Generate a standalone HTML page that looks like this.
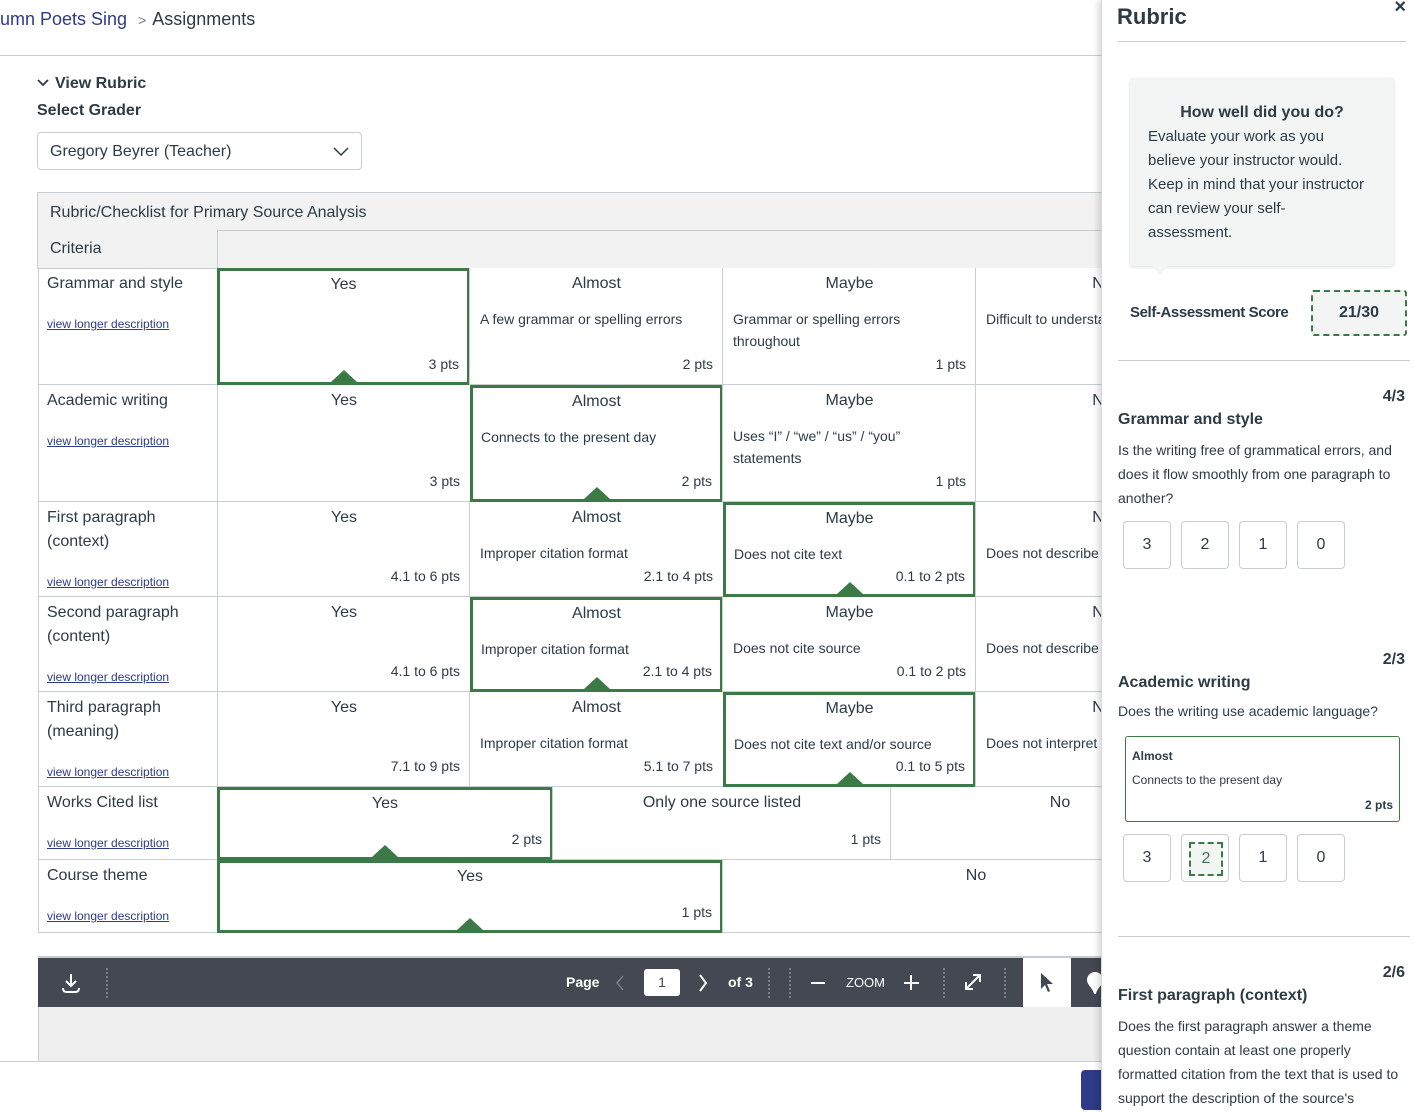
<!DOCTYPE html>
<html><head><meta charset="utf-8">
<style>
*{box-sizing:border-box;margin:0;padding:0}
body{width:1414px;height:1112px;overflow:hidden;position:relative;background:#fff;font-family:"Liberation Sans",sans-serif;color:#2d3b45}
.a{position:absolute}
.c{position:absolute;border:1px solid #c7cdd1;border-top:none;background:#fff}
.t{position:absolute;left:0;right:0;top:7px;text-align:center;font-size:16px}
.d{position:absolute;left:10px;right:8px;top:40px;font-size:14px;line-height:22px}
.p{position:absolute;right:10px;bottom:12px;font-size:14px}
.s{border:3px solid #3b7a46}
.s .t{top:5px}.s .d{left:8px;top:38px}.s .p{right:8px;bottom:10px}
.tri{position:absolute;bottom:0;left:50%;margin-left:-13px;width:0;height:0;border-left:13px solid transparent;border-right:13px solid transparent;border-bottom:12px solid #3b7a46}
.cr{position:absolute;left:38px;width:180px;border-left:1px solid #c7cdd1;border-right:1px solid #c7cdd1;border-bottom:1px solid #c7cdd1;padding:4px 8px;font-size:16px;line-height:24px}
.cr a{position:absolute;left:8px;top:44px;font-size:12px;color:#2d3b89;text-decoration:underline}
.cr.two a{top:68px}
.sb{position:absolute;width:48px;height:48px;border:1px solid #c7cdd1;border-radius:4px;text-align:center;line-height:46px;font-size:16px;color:#2d3b45}
.sep{position:absolute;top:10px;width:0;height:30px;border-left:2px dotted #7a808a}
</style></head><body>
<div class="a" style="left:0;top:9px;font-size:18px;color:#2d3b89;white-space:nowrap">umn Poets Sing <span style="color:#6b7780;font-size:14px;margin:0 6px">&gt;</span><span style="color:#2d3b45">Assignments</span></div>
<div class="a" style="left:0;top:55px;width:1110px;height:1px;background:#c7cdd1"></div>
<div class="a" style="left:37px;top:75px;font-size:16px;font-weight:bold"><svg width="12" height="10" style="margin-right:6px"><path d="M1 2l5 5 5-5" stroke="#2d3b45" stroke-width="1.8" fill="none"/></svg>View Rubric</div>
<div class="a" style="left:37px;top:102px;font-size:16px;font-weight:bold">Select Grader</div>
<div class="a" style="left:37px;top:132px;width:325px;height:38px;border:1px solid #c7cdd1;border-radius:4px;padding:0 12px;line-height:38px;font-size:16px">Gregory Beyrer (Teacher)
<svg width="16" height="10" class="a" style="right:12px;top:14px"><path d="M1 1l7 7 7-7" stroke="#2d3b45" stroke-width="1.5" fill="none"/></svg></div>
<div class="a" style="left:37px;top:192px;width:1080px;height:39px;background:#f2f2f2;border:1px solid #c7cdd1;padding:0 12px;line-height:39px;font-size:16px">Rubric/Checklist for Primary Source Analysis</div>
<div class="a" style="left:217px;top:231px;width:900px;height:38px;background:#f2f2f2;border-bottom:1px solid #c7cdd1"></div>
<div class="a" style="left:37px;top:230px;width:181px;height:39px;background:#f2f2f2;border:1px solid #c7cdd1;border-top:none;padding:0 12px;line-height:38px;font-size:16px">Criteria</div>

<div class="cr" style="top:268px;height:117px">Grammar and style<a>view longer description</a></div>
<div class="c s" style="left:217px;top:268px;width:253px;height:117px"><div class="t">Yes</div><div class="p">3 pts</div><div class="tri"></div></div>
<div class="c" style="left:469px;top:268px;width:255px;height:117px"><div class="t">Almost</div><div class="d">A few grammar or spelling errors</div><div class="p">2 pts</div></div>
<div class="c" style="left:722px;top:268px;width:255px;height:117px"><div class="t">Maybe</div><div class="d" style="right:30px">Grammar or spelling errors throughout</div><div class="p">1 pts</div></div>
<div class="c" style="left:975px;top:268px;width:255px;height:117px"><div class="t">No</div><div class="d">Difficult to understand</div></div>

<div class="cr" style="top:385px;height:117px">Academic writing<a>view longer description</a></div>
<div class="c" style="left:217px;top:385px;width:254px;height:117px"><div class="t">Yes</div><div class="p">3 pts</div></div>
<div class="c s" style="left:470px;top:385px;width:253px;height:117px"><div class="t">Almost</div><div class="d">Connects to the present day</div><div class="p">2 pts</div><div class="tri"></div></div>
<div class="c" style="left:722px;top:385px;width:255px;height:117px"><div class="t">Maybe</div><div class="d" style="right:50px">Uses “I” / “we” / “us” / “you” statements</div><div class="p">1 pts</div></div>
<div class="c" style="left:975px;top:385px;width:255px;height:117px"><div class="t">No</div></div>

<div class="cr two" style="top:502px;height:95px">First paragraph<br>(context)<a>view longer description</a></div>
<div class="c" style="left:217px;top:502px;width:254px;height:95px"><div class="t">Yes</div><div class="p">4.1 to 6 pts</div></div>
<div class="c" style="left:469px;top:502px;width:255px;height:95px"><div class="t">Almost</div><div class="d">Improper citation format</div><div class="p">2.1 to 4 pts</div></div>
<div class="c s" style="left:723px;top:502px;width:253px;height:95px"><div class="t">Maybe</div><div class="d">Does not cite text</div><div class="p">0.1 to 2 pts</div><div class="tri"></div></div>
<div class="c" style="left:975px;top:502px;width:255px;height:95px"><div class="t">No</div><div class="d">Does not describe</div></div>

<div class="cr two" style="top:597px;height:95px">Second paragraph<br>(content)<a>view longer description</a></div>
<div class="c" style="left:217px;top:597px;width:254px;height:95px"><div class="t">Yes</div><div class="p">4.1 to 6 pts</div></div>
<div class="c s" style="left:470px;top:597px;width:253px;height:95px"><div class="t">Almost</div><div class="d">Improper citation format</div><div class="p">2.1 to 4 pts</div><div class="tri"></div></div>
<div class="c" style="left:722px;top:597px;width:255px;height:95px"><div class="t">Maybe</div><div class="d">Does not cite source</div><div class="p">0.1 to 2 pts</div></div>
<div class="c" style="left:975px;top:597px;width:255px;height:95px"><div class="t">No</div><div class="d">Does not describe</div></div>

<div class="cr two" style="top:692px;height:95px">Third paragraph<br>(meaning)<a>view longer description</a></div>
<div class="c" style="left:217px;top:692px;width:254px;height:95px"><div class="t">Yes</div><div class="p">7.1 to 9 pts</div></div>
<div class="c" style="left:469px;top:692px;width:255px;height:95px"><div class="t">Almost</div><div class="d">Improper citation format</div><div class="p">5.1 to 7 pts</div></div>
<div class="c s" style="left:723px;top:692px;width:253px;height:95px"><div class="t">Maybe</div><div class="d">Does not cite text and/or source</div><div class="p">0.1 to 5 pts</div><div class="tri"></div></div>
<div class="c" style="left:975px;top:692px;width:255px;height:95px"><div class="t">No</div><div class="d">Does not interpret</div></div>

<div class="cr" style="top:787px;height:73px">Works Cited list<a>view longer description</a></div>
<div class="c s" style="left:217px;top:787px;width:336px;height:73px"><div class="t">Yes</div><div class="p">2 pts</div><div class="tri"></div></div>
<div class="c" style="left:552px;top:787px;width:340px;height:73px"><div class="t">Only one source listed</div><div class="p">1 pts</div></div>
<div class="c" style="left:890px;top:787px;width:340px;height:73px"><div class="t">No</div></div>

<div class="cr" style="top:860px;height:73px">Course theme<a>view longer description</a></div>
<div class="c s" style="left:217px;top:860px;width:506px;height:73px"><div class="t">Yes</div><div class="p">1 pts</div><div class="tri"></div></div>
<div class="c" style="left:722px;top:860px;width:508px;height:73px"><div class="t">No</div></div>

<div class="a" style="left:38px;top:956px;width:1070px;height:2px;background:#c7cdd1"></div>
<div class="a" style="left:38px;top:958px;width:1070px;height:49px;background:#434853;color:#fff">
  <svg class="a" style="left:24px;top:15px" width="18" height="20"><path d="M9 1v12M4 8l5 5 5-5M1 15q0 4 4 4h8q4 0 4-4" stroke="#fff" stroke-width="2" fill="none"/></svg>
  <div class="sep" style="left:68px"></div>
  <div class="a" style="left:528px;top:16px;font-size:14px;font-weight:bold">Page</div>
  <svg class="a" style="left:577px;top:17px" width="10" height="16"><path d="M8 1L2 8l6 7" stroke="#7a808a" stroke-width="1.5" fill="none"/></svg>
  <div class="a" style="left:606px;top:11px;width:36px;height:27px;background:#fff;border-radius:3px;color:#434853;text-align:center;line-height:27px;font-size:14px">1</div>
  <svg class="a" style="left:660px;top:16px" width="10" height="18"><path d="M2 1l6 8-6 8" stroke="#fff" stroke-width="2" fill="none"/></svg>
  <div class="a" style="left:690px;top:16px;font-size:14px;font-weight:bold">of 3</div>
  <div class="sep" style="left:730px"></div><div class="sep" style="left:751px"></div>
  <div class="a" style="left:773px;top:24px;width:14px;height:2px;background:#fff"></div>
  <div class="a" style="left:808px;top:17px;font-size:13px">ZOOM</div>
  <div class="a" style="left:866px;top:24px;width:15px;height:2px;background:#fff"></div>
  <div class="a" style="left:872px;top:17px;width:2px;height:15px;background:#fff"></div>
  <div class="sep" style="left:905px"></div>
  <svg class="a" style="left:925px;top:14px" width="20" height="20"><path d="M3 17L17 3M10 3h7v7M3 10v7h7" stroke="#fff" stroke-width="2" fill="none"/></svg>
  <div class="sep" style="left:966px"></div>
  <div class="a" style="left:985px;top:0;width:48px;height:49px;background:#fff"></div>
  <svg class="a" style="left:1001px;top:14px" width="16" height="22"><path d="M2 1v16l4-4 3 7 2-1-3-7h6z" fill="#434853"/></svg>
  <svg class="a" style="left:1047px;top:13px" width="20" height="24"><path d="M10 1a8 8 0 0 1 8 8c0 5-6 8-7 14h-2c-1-6-7-9-7-14a8 8 0 0 1 8-8z" fill="#fff"/></svg>
</div>
<div class="a" style="left:38px;top:1007px;width:1070px;height:54px;background:#efefef;border-left:1px solid #c7cdd1"></div>
<div class="a" style="left:0;top:1061px;width:1110px;height:1px;background:#c7cdd1"></div>
<div class="a" style="left:1081px;top:1070px;width:30px;height:40px;background:#2d3b89;border-radius:4px"></div>

<div class="a" style="left:1101px;top:0;width:313px;height:1112px;background:#fff;box-shadow:-3px 0 6px rgba(0,0,0,.15);border-left:1px solid #d5d9dc">
  <div class="a" style="left:15px;top:4px;font-size:22px;font-weight:bold">Rubric</div>
  <div class="a" style="right:8px;top:-4px;font-size:20px;font-weight:bold">×</div>
  <div class="a" style="left:16px;top:41px;width:288px;height:1px;background:#c7cdd1"></div>
  <div class="a" style="left:28px;top:78px;width:264px;height:188px;background:#f2f5f4;border-radius:3px;box-shadow:0 1px 3px rgba(0,0,0,.15);padding:23px 30px 0 18px;font-size:15px;line-height:24px">
    <div style="text-align:center;font-weight:bold;font-size:16px;margin-right:-12px">How well did you do?</div>
    Evaluate your work as you believe your instructor would. Keep in mind that your instructor can review your self-assessment.
  </div>
  <div class="a" style="left:50px;top:266px;width:0;height:0;border-left:8px solid transparent;border-right:8px solid transparent;border-top:8px solid #f2f5f4"></div>
  <div class="a" style="left:28px;top:304px;font-size:15px;font-weight:bold;letter-spacing:-0.4px">Self-Assessment Score</div>
  <div class="a" style="left:209px;top:290px;width:96px;height:46px;border:2px dashed #3b7a46;border-radius:3px;background:#f2f5f4;text-align:center;line-height:42px;font-size:16px;font-weight:bold">21/30</div>
  <div class="a" style="left:16px;top:360px;width:292px;height:1px;background:#c7cdd1"></div>
  <div class="a" style="right:9px;top:388px;font-size:16px;font-weight:bold">4/3</div>
  <div class="a" style="left:16px;top:411px;font-size:16px;font-weight:bold">Grammar and style</div>
  <div class="a" style="left:16px;top:438px;width:285px;font-size:14px;line-height:24px">Is the writing free of grammatical errors, and does it flow smoothly from one paragraph to another?</div>
  <div class="sb" style="left:21px;top:521px">3</div><div class="sb" style="left:79px;top:521px">2</div><div class="sb" style="left:137px;top:521px">1</div><div class="sb" style="left:195px;top:521px">0</div>
  <div class="a" style="right:9px;top:651px;font-size:16px;font-weight:bold">2/3</div>
  <div class="a" style="left:16px;top:674px;font-size:16px;font-weight:bold">Academic writing</div>
  <div class="a" style="left:16px;top:703px;font-size:14px">Does the writing use academic language?</div>
  <div class="a" style="left:23px;top:736px;width:275px;height:86px;border:1px solid #3b7a46;border-radius:3px">
    <div class="a" style="left:6px;top:12px;font-size:12px;font-weight:bold">Almost</div>
    <div class="a" style="left:6px;top:36px;font-size:12px">Connects to the present day</div>
    <div class="a" style="right:6px;top:61px;font-size:12px;font-weight:bold">2 pts</div>
  </div>
  <div class="sb" style="left:21px;top:834px">3</div>
  <div class="sb" style="left:79px;top:834px"><div class="a" style="left:7px;top:7px;width:34px;height:34px;border:2px dashed #3b7a46;background:#f2f5f4;line-height:30px;color:#3b7a46">2</div></div>
  <div class="sb" style="left:137px;top:834px">1</div><div class="sb" style="left:195px;top:834px">0</div>
  <div class="a" style="left:16px;top:936px;width:292px;height:1px;background:#c7cdd1"></div>
  <div class="a" style="right:9px;top:964px;font-size:16px;font-weight:bold">2/6</div>
  <div class="a" style="left:16px;top:987px;font-size:16px;font-weight:bold">First paragraph (context)</div>
  <div class="a" style="left:16px;top:1014px;width:292px;font-size:14px;line-height:24px">Does the first paragraph answer a theme question contain at least one properly formatted citation from the text that is used to support the description of the source's</div>
</div>
</body></html>
